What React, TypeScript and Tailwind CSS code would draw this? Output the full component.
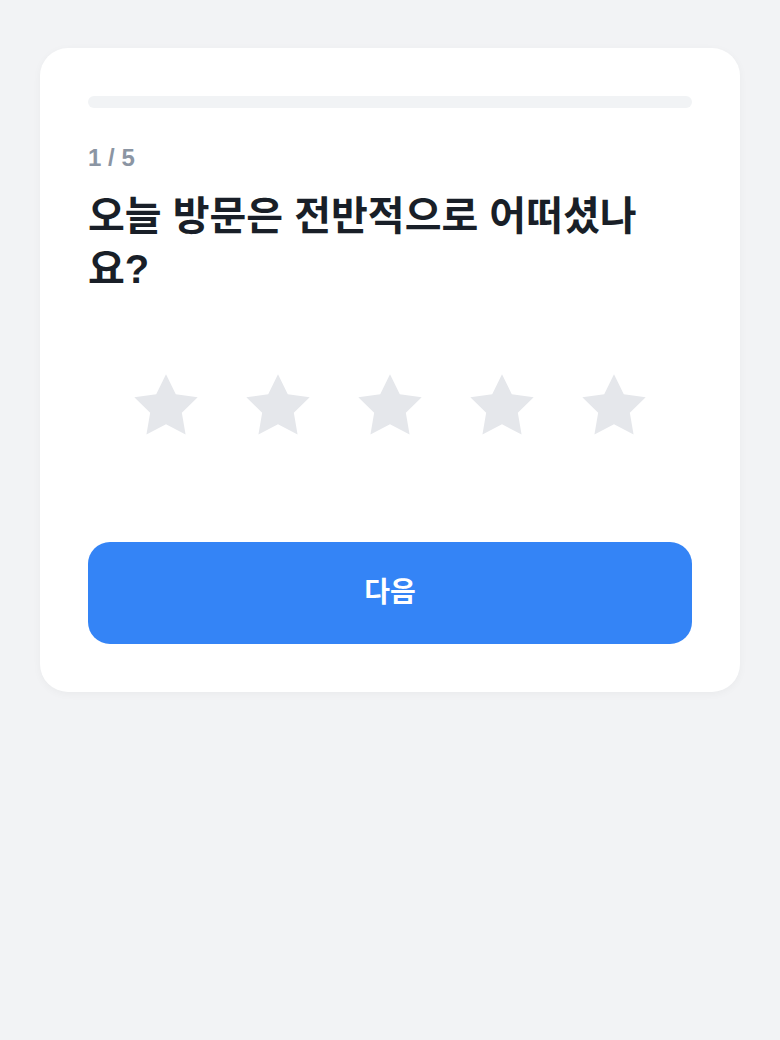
import React, { useState } from 'react';

const StarIcon = ({ filled }: { filled: boolean }) => (
  <svg viewBox="0 0 24 24" className="w-[76px] h-[76px]" fill={filled ? '#fbbf24' : '#e5e7eb'}>
    <path d="M12 2l3.09 6.26L22 9.27l-5 4.87 1.18 6.88L12 17.77l-6.18 3.25L7 14.14 2 9.27l6.91-1.01L12 2z" />
  </svg>
);

const App = () => {
  const [rating, setRating] = useState(0);
  const step = 1;
  const total = 5;

  return (
    <div
      className="min-h-screen bg-[#f2f3f5] px-10 pt-12"
      style={{ fontFamily: '"Liberation Sans", "Noto Sans CJK KR", sans-serif' }}
    >
      <div className="bg-white rounded-[28px] shadow-[0_2px_8px_rgba(0,0,0,0.04)] p-12">
        <div className="h-3 rounded-full bg-[#f1f3f5]" />

        <div className="mt-[34px] text-[24px] leading-8 font-bold text-[#8b95a3]">
          {step} / {total}
        </div>

        <h1 className="mt-4 text-[40px] leading-[53px] font-bold text-[#191f28]">
          오늘 방문은 전반적으로 어떠셨나요?
        </h1>

        <div className="mt-[72px] mb-[98px] flex justify-center gap-9">
          {[1, 2, 3, 4, 5].map((n) => (
            <button key={n} onClick={() => setRating(n)} className="block">
              <StarIcon filled={n <= rating} />
            </button>
          ))}
        </div>

        <button className="w-full h-[102px] rounded-[22px] bg-[#3484f6] text-white text-[28px] font-semibold">
          다음
        </button>
      </div>
    </div>
  );
};

export default App;
